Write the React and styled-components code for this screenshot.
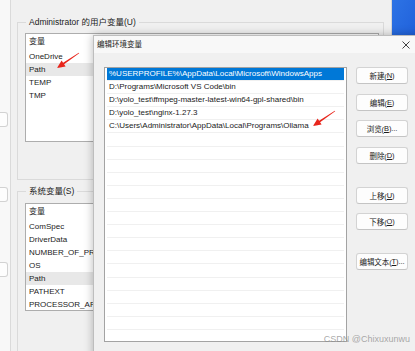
import React from 'react';
import styled, { createGlobalStyle } from 'styled-components';

const GlobalStyle = createGlobalStyle`
  html, body {
    margin: 0;
    padding: 0;
    background: #f0f0f0;
  }
  body {
    font-family: "Liberation Sans", "Noto Sans CJK SC", sans-serif;
    color: #1b1b1b;
  }
  * {
    box-sizing: border-box;
  }
`;

const Desktop = styled.div`
  position: relative;
  width: 415px;
  height: 351px;
  overflow: hidden;
  background: linear-gradient(118deg, #0b3fb8 0%, #1b5fdb 28%, #0c48c4 44%, #3a86f0 58%, #1652d2 78%, #0a3db4 100%);
`;

/* fragment of the system properties window peeking out on the left */
const BackStrip = styled.div`
  position: absolute;
  left: 0;
  top: 0;
  width: 10px;
  height: 100%;
  background: #f8f8f8;
  display: flex;
  flex-direction: column;
  gap: 60px;
  padding-top: 112px;
`;

const StripBox = styled.div`
  width: 8px;
  height: 15px;
  border: 1px solid #d2d2d2;
  border-left: none;
  border-radius: 0 3px 3px 0;
  background: #fdfdfd;
`;

const EnvWindow = styled.div`
  position: absolute;
  left: 10px;
  top: 0;
  width: 382px;
  height: 351px;
  background: #f0f0f0;
  border-left: 1px solid #dadada;
  border-right: 1px solid #d6d6d6;
  display: flex;
  flex-direction: column;
  padding: 16px 0 0 6px;
`;

const GroupBox = styled.fieldset`
  margin: ${({ $first }) => ($first ? '0' : '5px 0 0 0')};
  width: 367px;
  min-width: 0;
  border: 1px solid #dadada;
  padding: ${({ $first }) => ($first ? '5px 4px 37px 7px' : '6px 4px 40px 7px')};
`;

const GroupLegend = styled.legend`
  margin-left: 1px;
  padding: 0 3px;
  font-size: 8.5px;
  line-height: 12px;
  color: #1b1b1b;
`;

const VarList = styled.div`
  height: ${({ $height }) => $height}px;
  background: #ffffff;
  border: 1px solid #adadad;
  overflow: hidden;
`;

const VarHeader = styled.div`
  height: 16px;
  line-height: 16px;
  padding-left: 3px;
  font-size: 8px;
`;

const VarRow = styled.div`
  height: 13px;
  line-height: 13px;
  padding-left: 3px;
  font-size: 8px;
  white-space: nowrap;
  background: ${({ $selected }) => ($selected ? '#e8e8e8' : 'transparent')};
`;

const Dialog = styled.div`
  position: absolute;
  left: 93px;
  top: 35px;
  width: 337px;
  height: 330px;
  background: #f0f0f0;
  border: 1px solid #bdbdbd;
  box-shadow: 0 0 9px rgba(0, 0, 0, 0.28);
  display: flex;
  flex-direction: column;
`;

const TitleBar = styled.div`
  height: 17px;
  flex-shrink: 0;
  display: flex;
  align-items: center;
  justify-content: space-between;
  background: #f8f8f8;
  padding-left: 3px;
`;

const Title = styled.div`
  font-size: 7.5px;
  line-height: 17px;
  color: #1b1b1b;
`;

const CloseButton = styled.div`
  width: 46px;
  height: 17px;
  display: flex;
  align-items: center;
  justify-content: center;
`;

const DialogBody = styled.div`
  display: flex;
  gap: 9px;
  padding: 14px 0 0 10px;
`;

const PathList = styled.div`
  width: 243px;
  height: 275px;
  flex-shrink: 0;
  background: #ffffff;
  border: 1px solid #a3a3a3;
  overflow: hidden;
`;

const PathRow = styled.div`
  height: 13.1px;
  line-height: 12.1px;
  margin: 0 2px;
  padding-left: 2px;
  font-size: 8px;
  white-space: nowrap;
  border-bottom: 1px solid #f0f0f0;
  background: ${({ $selected }) => ($selected ? '#0078d7' : 'transparent')};
  color: ${({ $selected }) => ($selected ? '#ffffff' : '#1b1b1b')};
`;

const ButtonColumn = styled.div`
  display: flex;
  flex-direction: column;
  width: 52px;
`;

const DialogButton = styled.div`
  height: 17px;
  margin-top: ${({ $first, $spaced }) => ($first ? '0' : $spaced ? '23px' : '9.5px')};
  background: #fdfdfd;
  border: 1px solid #d3d3d3;
  border-bottom-color: #c4c4c4;
  border-radius: 3px;
  display: flex;
  align-items: center;
  justify-content: center;
  font-size: 7.5px;
  color: #1b1b1b;
  white-space: nowrap;
  letter-spacing: -0.1px;

  u {
    text-decoration: underline;
    text-underline-offset: 1px;
  }
`;

const ArrowMark = styled.svg`
  position: absolute;
  width: 24px;
  height: 18px;
  left: ${({ $x }) => $x}px;
  top: ${({ $y }) => $y}px;
`;

const Watermark = styled.div`
  position: absolute;
  right: 5px;
  bottom: 7px;
  font-size: 9px;
  color: rgba(140, 140, 140, 0.75);
  white-space: nowrap;
`;

const userVars = ['OneDrive', 'Path', 'TEMP', 'TMP'];
const systemVars = ['ComSpec', 'DriverData', 'NUMBER_OF_PROCESSORS', 'OS', 'Path', 'PATHEXT', 'PROCESSOR_ARCHITECTURE'];

const paths = [
  '%USERPROFILE%\\AppData\\Local\\Microsoft\\WindowsApps',
  'D:\\Programs\\Microsoft VS Code\\bin',
  'D:\\yolo_test\\ffmpeg-master-latest-win64-gpl-shared\\bin',
  'D:\\yolo_test\\nginx-1.27.3',
  'C:\\Users\\Administrator\\AppData\\Local\\Programs\\Ollama',
];

const buttons = [
  { label: '新建', key: 'N' },
  { label: '编辑', key: 'E' },
  { label: '浏览', key: 'B', more: true },
  { label: '删除', key: 'D' },
  { label: '上移', key: 'U', spaced: true },
  { label: '下移', key: 'O' },
  { label: '编辑文本', key: 'T', more: true, spaced: true },
];

const Arrow = ({ x, y }) => (
  <ArrowMark $x={x} $y={y} viewBox="0 0 24 18">
    <polygon
      points="22.8,0.7 23.2,1.3 8.1,12.2 9.6,14.4 1,16 5.6,8.6 7.1,10.8"
      fill="#e8261c"
    />
  </ArrowMark>
);

const App = () => {
  const emptyRows = Array.from({ length: 21 - paths.length });

  return (
    <>
      <GlobalStyle />
      <Desktop>
        <BackStrip>
          <StripBox />
          <StripBox />
          <StripBox />
        </BackStrip>

        <EnvWindow>
          <GroupBox $first>
            <GroupLegend>Administrator 的用户变量(U)</GroupLegend>
            <VarList $height={109}>
              <VarHeader>变量</VarHeader>
              {userVars.map((name) => (
                <VarRow key={name} $selected={name === 'Path'}>
                  {name}
                </VarRow>
              ))}
            </VarList>
          </GroupBox>
          <GroupBox>
            <GroupLegend>系统变量(S)</GroupLegend>
            <VarList $height={108}>
              <VarHeader>变量</VarHeader>
              {systemVars.map((name) => (
                <VarRow key={name} $selected={name === 'Path'}>
                  {name}
                </VarRow>
              ))}
            </VarList>
          </GroupBox>
        </EnvWindow>

        <Dialog>
          <TitleBar>
            <Title>编辑环境变量</Title>
            <CloseButton>
              <svg width="8" height="8" viewBox="0 0 8 8">
                <path d="M0.5 0.5 L7.5 7.5 M7.5 0.5 L0.5 7.5" stroke="#2b2b2b" strokeWidth="0.9" />
              </svg>
            </CloseButton>
          </TitleBar>
          <DialogBody>
            <PathList>
              {paths.map((p, i) => (
                <PathRow key={p} $selected={i === 0}>
                  {p}
                </PathRow>
              ))}
              {emptyRows.map((_, i) => (
                <PathRow key={`empty-${i}`} />
              ))}
            </PathList>
            <ButtonColumn>
              {buttons.map((b, i) => (
                <DialogButton key={b.key} $first={i === 0} $spaced={b.spaced}>
                  {b.label}(<u>{b.key}</u>){b.more ? '...' : ''}
                </DialogButton>
              ))}
            </ButtonColumn>
          </DialogBody>
        </Dialog>

        <Arrow x={56} y={52} />
        <Arrow x={312} y={110} />

        <Watermark>CSDN @Chixuxunwu</Watermark>
      </Desktop>
    </>
  );
};

export default App;
